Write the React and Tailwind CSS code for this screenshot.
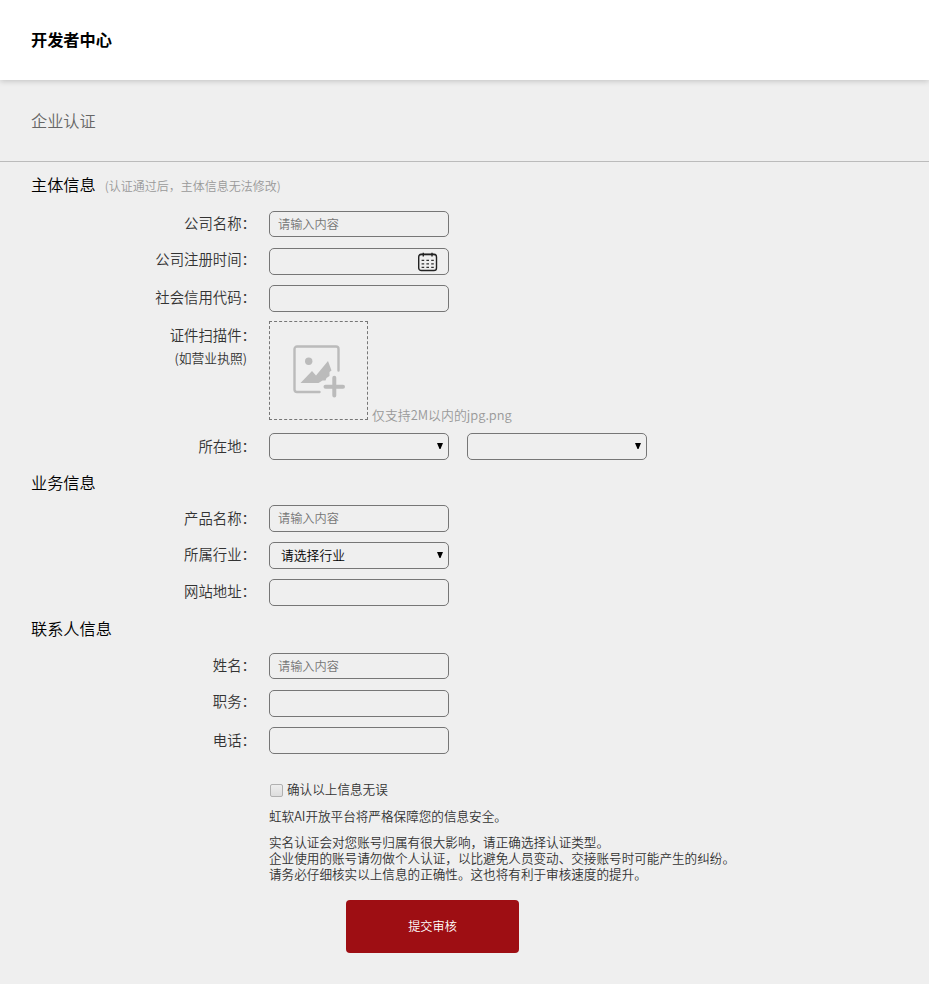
import { useState } from "react";

const SUBJECT_HINT = "(认证通过后，主体信息无法修改)";

const CITY_ROW = ["province", "city"];

const CALENDAR_DOTS = [8.3, 11.8, 15.3];

function CalendarIcon() {
  return (
    <svg className="h-5 w-5 shrink-0" viewBox="0 0 20 20" fill="none" aria-hidden="true">
      <rect x="0.7" y="2.3" width="17.8" height="16.2" rx="2.6" stroke="#222" strokeWidth="1.4" />
      <path d="M1.5 2.6h16" stroke="#222" strokeWidth="1.4" />
      <path d="M5.3 0.8v3.6M14 0.8v3.6" stroke="#222" strokeWidth="1.4" />
      {CALENDAR_DOTS.map((y) => (
        <path
          key={y}
          d={`M3.6 ${y}h2.6M8.4 ${y}h2.6M13.2 ${y}h2.6`}
          stroke="#333"
          strokeWidth="1.2"
        />
      ))}
    </svg>
  );
}

function AddImageIcon() {
  return (
    <svg className="h-[54px] w-[54px]" viewBox="0 0 54 54" fill="none" aria-hidden="true">
      <path
        d="M46.5 26.5V5A2.5 2.5 0 0 0 44 2.5H5A2.5 2.5 0 0 0 2.5 5v40.5A2.5 2.5 0 0 0 5 48h22.5"
        stroke="#bbb"
        strokeWidth="2.4"
        strokeLinecap="round"
      />
      <circle cx="16.7" cy="17.3" r="3.7" fill="#bbb" />
      <path d="M8.5 39 20 27l4 4.5L36 17l3.500 9.500-2 1.500v4l-3 2-1 2.500h-3l-4 2.500Z" fill="#bbb" />
      <path d="M42.3 33.800v17.700M33.500 42.700h17.500" stroke="#bbb" strokeWidth="4" strokeLinecap="round" />
    </svg>
  );
}

function Label({ children }) {
  return (
    <span className="w-[256px] shrink-0 text-right text-[14.4px] leading-[23px] text-[#333]">
      {children}
    </span>
  );
}

function Row({ label, className = "mb-[10px] h-[27px]", labelClass = "mt-0", children }) {
  return (
    <div className={`flex ${className}`}>
      <div className={`flex items-start ${labelClass}`}>
        <Label>{label}：</Label>
      </div>
      <div className="ml-[13px] flex">{children}</div>
    </div>
  );
}

function TextInput({ placeholder, icon }) {
  return (
    <div className="flex h-full w-[180px] items-center rounded-[5px] border border-[#767676] pr-[10px] pl-2">
      <input
        className="min-w-0 flex-1 bg-transparent text-[12.2px] text-black outline-none placeholder:text-[#757575]"
        placeholder={placeholder}
      />
      {icon}
    </div>
  );
}

function SelectBox({ label, text }) {
  return (
    <button
      type="button"
      aria-label={label}
      className="flex h-full w-[180px] items-center justify-between rounded-[5px] border border-[#767676] pr-[5px] pb-px pl-[11px] text-[12.8px] text-black"
    >
      <span>{text}</span>
      <svg className="mb-px h-[6px] w-[6px]" viewBox="0 0 6 6" aria-hidden="true">
        <path d="M0 0h6L3.5 6h-1Z" fill="#000" />
      </svg>
    </button>
  );
}

function SectionTitle({ children, className }) {
  return (
    <h2 className={`pl-[31px] text-[16.2px] leading-6 font-[350] text-black ${className}`}>
      {children}
    </h2>
  );
}

export default function App() {
  const [confirmed, setConfirmed] = useState(false);

  return (
    <div className="flex min-h-screen flex-col bg-[#efefef] font-['Noto_Sans_CJK_SC',sans-serif] font-[350]">
      <header className="flex h-20 items-center bg-white pb-[2px] pl-[31px] shadow-[0_1px_6px_rgba(0,0,0,0.2)]">
        <h1 className="text-[16.2px] font-bold text-black">开发者中心</h1>
      </header>

      <div className="flex h-[82px] items-center border-b border-[#bbb] pl-[31px] text-[16.2px] text-[#666]">
        企业认证
      </div>

      <section>
        <SectionTitle className="mt-[10px] mb-[39px] h-0">
          主体信息
          <span className="ml-[9px] text-[12px] text-[#999]">{SUBJECT_HINT}</span>
        </SectionTitle>
        <Row label="公司名称" className="mb-[11px] h-[26px]">
          <TextInput placeholder="请输入内容" />
        </Row>
        <Row label="公司注册时间" labelClass="-mt-px">
          <TextInput icon={<CalendarIcon />} />
        </Row>
        <Row label="社会信用代码" className="mb-[9px] h-[27px]">
          <TextInput />
        </Row>
        <div className="mb-[13px] flex h-[99px]">
          <div className="flex w-[256px] flex-col pt-[2px]">
            <Label>证件扫描件：</Label>
            <span className="pr-[9px] text-right text-[12.8px] leading-[23px] text-[#333]">
              (如营业执照)
            </span>
          </div>
          <button
            type="button"
            aria-label="上传"
            className="ml-[13px] flex w-[99px] items-center justify-center border border-dashed border-[#767676]"
          >
            <AddImageIcon />
          </button>
          <span className="ml-1 self-end text-[12.9px] leading-[10px] text-[#999]">
            仅支持2M以内的jpg.png
          </span>
        </div>
        <Row label="所在地" className="h-[27px]" labelClass="mt-px">
          <div className="flex gap-[18px]">
            {CITY_ROW.map((name) => (
              <SelectBox key={name} label={name} />
            ))}
          </div>
        </Row>
      </section>

      <section>
        <SectionTitle className="mt-[10px] mb-[11px]">业务信息</SectionTitle>
        <Row label="产品名称" labelClass="mt-px">
          <TextInput placeholder="请输入内容" />
        </Row>
        <Row label="所属行业">
          <SelectBox label="industry" text="请选择行业" />
        </Row>
        <Row label="网站地址" className="h-[27px]">
          <TextInput />
        </Row>
      </section>

      <section>
        <SectionTitle className="mt-[10px] mb-[13px]">联系人信息</SectionTitle>
        <Row label="姓名" className="mb-[11px] h-[26px]">
          <TextInput placeholder="请输入内容" />
        </Row>
        <Row label="职务" labelClass="-mt-px">
          <TextInput />
        </Row>
        <Row label="电话" className="h-[27px]" labelClass="mt-px">
          <TextInput />
        </Row>
      </section>

      <div className="mt-[27px] ml-[269px] text-[12.6px] leading-4 text-[#333]">
        <label className="flex items-center">
          <input
            type="checkbox"
            checked={confirmed}
            onChange={(e) => setConfirmed(e.target.checked)}
            className="mt-[3px] mr-1 ml-px h-[13px] w-[13px] appearance-none rounded-[2px] border border-[#b0b0b0] bg-linear-to-b from-[#eee] to-[#ddd] checked:bg-[#767676]"
          />
          确认以上信息无误
        </label>
        <p className="mt-[11px]">虹软AI开放平台将严格保障您的信息安全。</p>
        <p className="mt-[10px]">
          实名认证会对您账号归属有很大影响，请正确选择认证类型。
          <br />
          企业使用的账号请勿做个人认证，以比避免人员变动、交接账号时可能产生的纠纷。
          <br />
          请务必仔细核实以上信息的正确性。这也将有利于审核速度的提升。
        </p>
      </div>

      <button
        type="button"
        className="mt-[18px] ml-[346px] h-[53px] w-[173px] rounded-[4px] bg-[#9e0e13] text-[12.2px] text-white"
      >
        提交审核
      </button>
    </div>
  );
}
